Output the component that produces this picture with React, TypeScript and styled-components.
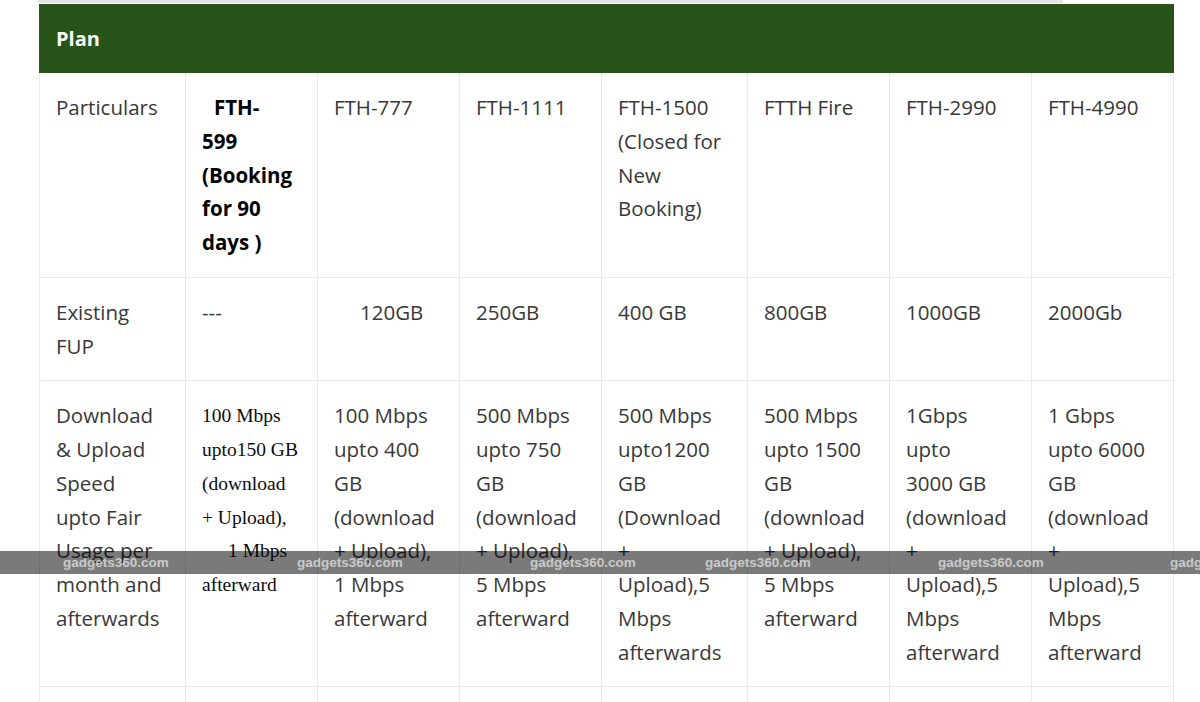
import React from "react";
import styled, { createGlobalStyle } from "styled-components";

const GlobalStyle = createGlobalStyle`
  html, body {
    margin: 0;
    padding: 0;
    background: #ffffff;
  }
  body {
    font-family: "Open Sans", "Noto Sans", sans-serif;
  }
`;

const Page = styled.div`
  position: relative;
  width: 1200px;
  height: 702px;
  overflow: hidden;
  padding-left: 39px;
  box-sizing: border-box;
`;

const TopRule = styled.div`
  width: 1025px;
  height: 3px;
  margin-left: -1px;
  margin-bottom: 1px;
  background: #e4e4e4;
`;

const Table = styled.table`
  width: 1134px;
  table-layout: fixed;
  border-collapse: collapse;
  border-spacing: 0;
`;

const HeadCell = styled.th`
  height: 68px;
  padding: 0 16px;
  background: #285319;
  color: #ffffff;
  font-family: "Open Sans", sans-serif;
  font-size: 20px;
  font-weight: 700;
  text-align: left;
  border: 1px solid #285319;
  box-sizing: border-box;
`;

const Cell = styled.td<{ $empty?: boolean }>`
  vertical-align: top;
  padding: ${(p) => (p.$empty ? "0" : "18px 16px 17px")};
  height: ${(p) => (p.$empty ? "40px" : "auto")};
  border: 1px solid #e7e9f0;
  color: #383838;
  font-family: "Open Sans", sans-serif;
  font-size: 20.5px;
  line-height: 33.75px;
`;

const Line = styled.div<{ $indent?: number }>`
  white-space: nowrap;
  padding-left: ${(p) => p.$indent || 0}px;
`;

const Bold = styled.div`
  font-weight: 700;
  color: #000000;
`;

const Serif = styled.div`
  font-family: "Liberation Serif", "Times New Roman", serif;
  font-size: 19.5px;
  color: #0c0c0c;
`;

const Watermark = styled.div`
  position: absolute;
  left: 0;
  top: 551px;
  width: 100%;
  height: 23px;
  background: rgba(0, 0, 0, 0.52);
`;

const Mark = styled.span`
  position: absolute;
  top: 3px;
  font-family: "Liberation Sans", Arial, sans-serif;
  font-size: 13.5px;
  font-weight: 700;
  line-height: 17px;
  color: rgba(255, 255, 255, 0.62);
  white-space: nowrap;
`;

type Row = {
  label: string[];
  cells: React.ReactNode[];
};

const colWidths = [146, 132, 142, 142, 146, 142, 142, 142];

// watermark strip positions, as seen in the shot
const marks = [63, 297, 530, 705, 938, 1170];

const lines = (arr: string[]) =>
  arr.map((l, i) => (
    <Line key={i}>{l}</Line>
  ));

const rows: Row[] = [
  {
    label: ["Particulars"],
    cells: [
      <Bold key="a">
        <Line $indent={12}>FTH-</Line>
        <Line>599</Line>
        <Line>(Booking</Line>
        <Line>for 90</Line>
        <Line>days )</Line>
      </Bold>,
      lines(["FTH-777"]),
      lines(["FTH-1111"]),
      lines(["FTH-1500", "(Closed for", "New", "Booking)"]),
      lines(["FTTH Fire"]),
      lines(["FTH-2990"]),
      lines(["FTH-4990"]),
    ],
  },
  {
    label: ["Existing", "FUP"],
    cells: [
      lines(["---"]),
      <Line key="b" $indent={26}>120GB</Line>,
      lines(["250GB"]),
      lines(["400 GB"]),
      lines(["800GB"]),
      lines(["1000GB"]),
      lines(["2000Gb"]),
    ],
  },
  {
    label: ["Download", "& Upload", "Speed", "upto Fair", "Usage per", "month and", "afterwards"],
    cells: [
      <Serif key="c">
        <Line>100 Mbps</Line>
        <Line>upto150 GB</Line>
        <Line>(download</Line>
        <Line>+ Upload),</Line>
        <Line $indent={26}>1 Mbps</Line>
        <Line>afterward</Line>
      </Serif>,
      lines(["100 Mbps", "upto 400", "GB", "(download", "+ Upload),", "1 Mbps", "afterward"]),
      lines(["500 Mbps", "upto 750", "GB", "(download", "+ Upload),", "5 Mbps", "afterward"]),
      lines(["500 Mbps", "upto1200", "GB", "(Download", "+", "Upload),5", "Mbps", "afterwards"]),
      lines(["500 Mbps", "upto 1500", "GB", "(download", "+ Upload),", "5 Mbps", "afterward"]),
      lines(["1Gbps", "upto", "3000 GB", "(download", "+", "Upload),5", "Mbps", "afterward"]),
      lines(["1 Gbps", "upto 6000", "GB", "(download", "+", "Upload),5", "Mbps", "afterward"]),
    ],
  },
];

export default function App() {
  return (
    <Page>
      <GlobalStyle />
      <TopRule />
      <Table>
        <colgroup>
          {colWidths.map((w, i) => (
            <col key={i} style={{ width: w }} />
          ))}
        </colgroup>
        <thead>
          <tr>
            <HeadCell colSpan={8}>Plan</HeadCell>
          </tr>
        </thead>
        <tbody>
          {rows.map((r, i) => (
            <tr key={i}>
              <Cell>{lines(r.label)}</Cell>
              {r.cells.map((c, j) => (
                <Cell key={j}>{c}</Cell>
              ))}
            </tr>
          ))}
          <tr>
            {colWidths.map((_, i) => (
              <Cell key={i} $empty />
            ))}
          </tr>
        </tbody>
      </Table>
      <Watermark>
        {marks.map((x, i) => (
          <Mark key={i} style={{ left: x }}>
            gadgets360.com
          </Mark>
        ))}
      </Watermark>
    </Page>
  );
}
